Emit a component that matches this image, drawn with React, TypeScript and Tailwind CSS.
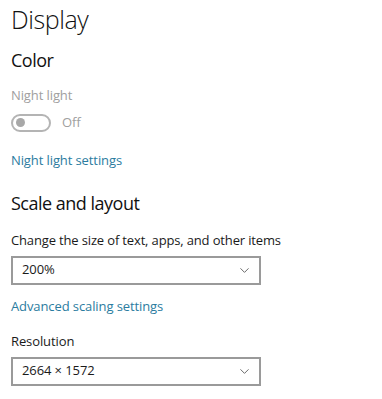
import { ChevronDown } from "lucide-react";

const font = { fontFamily: '"Open Sans", "Noto Sans", sans-serif' };

function Select({ value }: { value: string }) {
  return (
    <div className="flex h-[29px] w-[250px] items-center justify-between border-2 border-[#9a9a9a] bg-white pl-[9px] pr-[7px]">
      <span className="text-[13px] tracking-[-0.1px] text-[#1a1a1a]">{value}</span>
      <ChevronDown className="h-[15px] w-[15px] text-[#555555]" strokeWidth={1.4} />
    </div>
  );
}

export default function App() {
  return (
    <div className="h-[399px] w-[382px] bg-white pl-[11px] text-black" style={font}>
      <h1 className="pt-[3px] text-[25px] font-light leading-[33px] tracking-[-0.4px] text-[#111111]">Display</h1>

      <h2 className="mt-[12px] text-[18px] leading-[24px] tracking-[-0.5px] text-[#111111]">Color</h2>

      <div className="mt-[14px] text-[13px] leading-[18px] tracking-[-0.1px] text-[#a0a0a0]">Night light</div>
      <div className="mt-[9px] flex items-center gap-[11px]">
        <div className="flex h-[18px] w-[40px] items-center rounded-full border-2 border-[#b4b4b4] px-[3px]">
          <div className="h-[9px] w-[9px] rounded-full bg-[#a8a8a8]" />
        </div>
        <span className="text-[13px] text-[#a0a0a0]">Off</span>
      </div>

      <a className="mt-[18px] block text-[13px] leading-[18px] tracking-[-0.1px] text-[#2b7ca0]">Night light settings</a>

      <h2 className="mt-[22px] text-[18px] leading-[24px] tracking-[-0.5px] text-[#111111]">Scale and layout</h2>

      <div className="mt-[16px] text-[13px] leading-[18px] tracking-[-0.15px] text-[#1a1a1a]">Change the size of text, apps, and other items</div>
      <div className="mt-[7px]">
        <Select value="200%" />
      </div>

      <a className="mt-[12px] block text-[13px] leading-[18px] tracking-[-0.1px] text-[#2b7ca0]">Advanced scaling settings</a>

      <div className="mt-[17px] text-[13px] leading-[18px] tracking-[-0.1px] text-[#1a1a1a]">Resolution</div>
      <div className="mt-[7px]">
        <Select value="2664 × 1572" />
      </div>
    </div>
  );
}
